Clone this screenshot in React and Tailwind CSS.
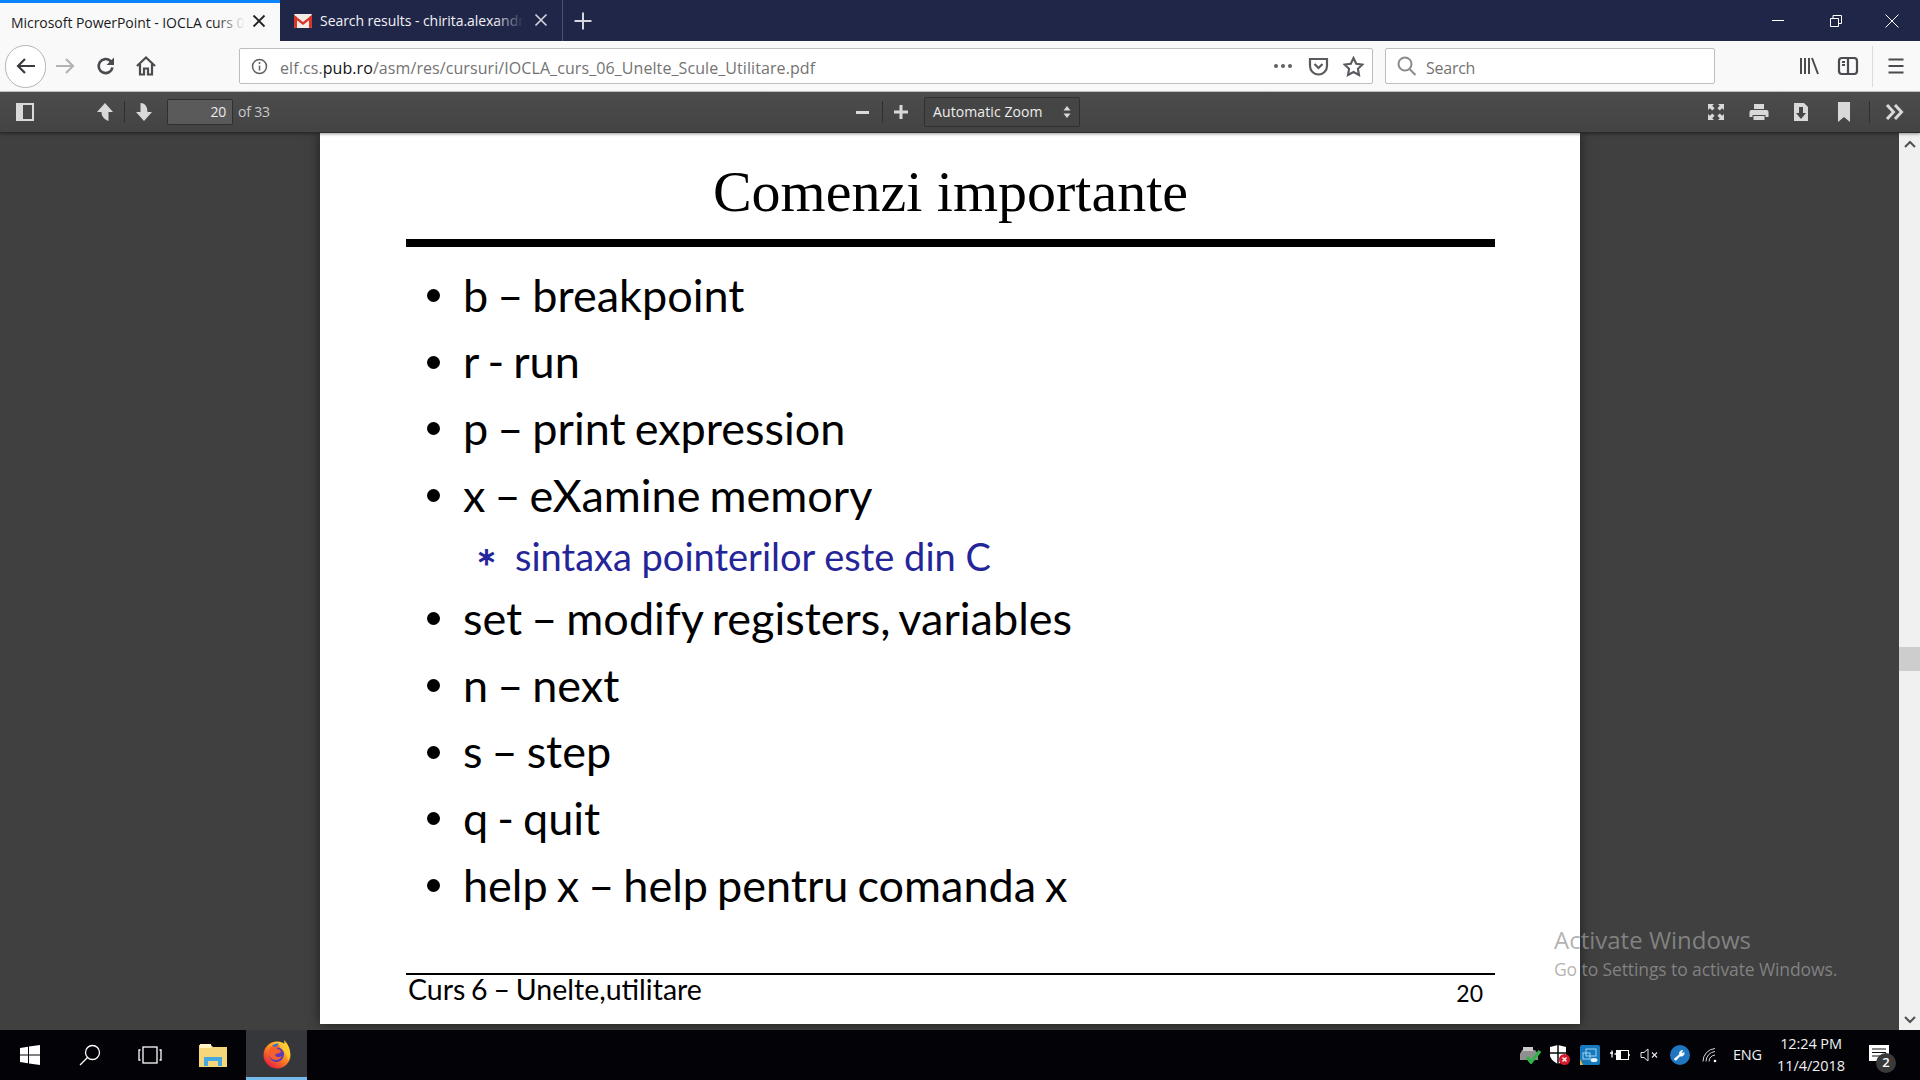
const ui = { fontFamily: '"Open Sans", "Noto Sans", sans-serif' };

function Slot({ w, children }) {
  return <div className="flex h-full shrink-0 items-center justify-center" style={{ width: w }}>{children}</div>;
}

function Ico({ s = 20, children, fill = "none", stroke = "currentColor", sw = 2, vb = "0 0 20 20" }) {
  return (
    <svg width={s} height={s} viewBox={vb} fill={fill} stroke={stroke} strokeWidth={sw}>
      {children}
    </svg>
  );
}

function Tabs() {
  return (
    <div className="flex h-[41px] shrink-0 bg-[#202648] text-[14px]" style={ui}>
      <div className="relative flex h-full w-[280px] items-center border-t-[3px] border-[#0a84ff] bg-[#f9f9fa] pl-[11px] text-[#1b1b1b]">
        <span className="whitespace-nowrap tracking-[-0.05px]">Microsoft PowerPoint - IOCLA curs 0</span>
        <div className="absolute left-[215px] top-0 h-full w-[30px] bg-gradient-to-r from-transparent to-[#f9f9fa]" />
        <div className="absolute left-[251px] top-[10px]">
          <Ico s={16} vb="0 0 16 16" sw={1.8} stroke="#222"><path d="M2.5 2.5l11 11M13.5 2.5l-11 11" /></Ico>
        </div>
      </div>
      <div className="relative flex h-full w-[283px] items-center border-r border-[#4b5070] pl-[14px] text-[#f2f2f5]">
        <svg width="18" height="14" viewBox="0 0 18 14" className="shrink-0">
          <rect width="18" height="14" rx="1" fill="#f1ece6" />
          <path d="M0 1l9 7 9-7v3l-9 7-9-7z" fill="#d8362a" />
          <path d="M0 1l3 2v11H1a1 1 0 0 1-1-1zM18 1l-3 2v11h2a1 1 0 0 0 1-1z" fill="#d8362a" />
        </svg>
        <span className="ml-[8px] whitespace-nowrap tracking-[-0.05px]">Search results - chirita.alexandra</span>
        <div className="absolute left-[215px] top-0 h-full w-[38px] bg-gradient-to-r from-transparent via-[#202648] via-75% to-[#202648]" />
        <div className="absolute left-[253px] top-[12px]">
          <Ico s={16} vb="0 0 16 16" sw={1.6} stroke="#d5d6de"><path d="M2.5 2.5l11 11M13.5 2.5l-11 11" /></Ico>
        </div>
      </div>
      <Slot w={40}>
        <Ico s={20} sw={2} stroke="#d5d6de" vb="0 0 20 20"><path d="M10 1.5v17M1.5 10h17" /></Ico>
      </Slot>
      <div className="flex-1" />
      <Slot w={58}><div className="mr-[2px] h-px w-[12px] bg-white" /></Slot>
      <Slot w={56}>
        <Ico s={14} vb="0 0 14 14" sw={1} stroke="#fff"><path d="M1.5 4.5h8v8h-8zM4 4.5V1.5h8.5v8H9.5" /></Ico>
      </Slot>
      <Slot w={56}>
        <Ico s={16} vb="0 0 16 16" sw={1} stroke="#fff"><path d="M1.5 1.5l13 13M14.5 1.5l-13 13" /></Ico>
      </Slot>
    </div>
  );
}

function Nav() {
  return (
    <div className="flex h-[51px] shrink-0 items-center border-b border-[#cfcfd1] bg-[#f9f9fa] pl-[5px] text-[#4a4a4f]" style={ui}>
      <div className="flex h-[43px] w-[41px] shrink-0 items-center justify-center rounded-full border border-[#b4b4b6] bg-white">
        <Ico s={22} sw={2.2} stroke="#3b3b3f" vb="0 0 22 22"><path d="M20 11H3M10 4l-7 7 7 7" /></Ico>
      </div>
      <Slot w={38}>
        <Ico s={22} sw={2.2} stroke="#b3b3b5" vb="0 0 22 22"><path d="M2 11h17M12 4l7 7-7 7" /></Ico>
      </Slot>
      <Slot w={44}>
        <Ico s={20} sw={2.6} stroke="#4a4a4f"><path d="M16.5 11.5a7 7 0 1 1-2-6.5l2.5 2.5" /><path d="M18 1.500v7.500h-7.500" fill="#4a4a4f" stroke="none" /></Ico>
      </Slot>
      <Slot w={36}>
        <Ico s={22} sw={2.2} stroke="#4a4a4f" vb="0 0 22 22"><path d="M2 11l9-8.5L20 11M5 9v10.5h4v-6h4v6h4V9" /></Ico>
      </Slot>
      <div className="ml-[75px] flex h-[36px] w-[1134px] shrink-0 items-center rounded-[2px] border border-[#bdbdbf] bg-white pl-[11px] pr-[8px]">
        <Ico s={17} vb="0 0 17 17" sw={1.5} stroke="#5f5f63"><circle cx="8.5" cy="8.5" r="7" /><path d="M8.5 7.5v5M8.5 4v2" /></Ico>
        <span className="ml-[12px] whitespace-nowrap pt-[3px] text-[16px] tracking-[0.08px] text-[#737373]">
          elf.cs.<span className="text-[#111]">pub.ro</span>/asm/res/cursuri/IOCLA_curs_06_Unelte_Scule_Utilitare.pdf
        </span>
        <div className="flex-1" />
        <div className="flex gap-[3px]">
          <div className="h-[4px] w-[4px] rounded-full bg-[#5f5f63]" />
          <div className="h-[4px] w-[4px] rounded-full bg-[#5f5f63]" />
          <div className="h-[4px] w-[4px] rounded-full bg-[#5f5f63]" />
        </div>
        <div className="ml-[16px]">
          <Ico s={21} vb="0 0 21 21" sw={2.2} stroke="#5a5a5e"><path d="M2 3h17v7a8.5 8.5 0 0 1-17 0zM6.5 8l4 4 4-4" /></Ico>
        </div>
        <div className="ml-[14px]">
          <Ico s={21} vb="0 0 21 21" sw={2.1} stroke="#5a5a5e"><path d="M10.5 2l2.7 5.7 6.2.8-4.5 4.3 1.1 6.2-5.5-3-5.5 3 1.1-6.2-4.5-4.3 6.2-.8z" /></Ico>
        </div>
      </div>
      <div className="ml-[12px] flex h-[36px] w-[330px] shrink-0 items-center rounded-[2px] border border-[#bdbdbf] bg-white pl-[10px]">
        <Ico s={22} vb="0 0 22 22" sw={2} stroke="#8a8a8e"><circle cx="9" cy="9" r="6.5" /><path d="M13.5 14l6 6" /></Ico>
        <span className="ml-[8px] pt-[3px] text-[16px] tracking-[-0.25px] text-[#737373]">Search</span>
      </div>
      <div className="w-[74px] shrink-0" />
      <Slot w={40}>
        <Ico s={20} sw={2} stroke="#4a4a4f"><path d="M2 2v16M6 2v16M10 2v16M13 2l6 16" /></Ico>
      </Slot>
      <Slot w={38}>
        <Ico s={22} vb="0 0 22 22" sw={2.2} stroke="#4a4a4f"><rect x="2" y="3" width="18" height="16" rx="3" /><path d="M11 3v16M5 7h3M5 10h3" /></Ico>
      </Slot>
      <div className="ml-[5px] h-[41px] w-px bg-[#dcdcde]" />
      <Slot w={46}>
        <Ico s={18} vb="0 0 18 18" sw={2.2} stroke="#4a4a4f"><path d="M1.5 2.5h15M1.5 9h15M1.5 15.5h15" /></Ico>
      </Slot>
    </div>
  );
}

function PdfToolbar() {
  const c = "#d9d9d9";
  return (
    <div className="z-10 flex h-[41px] shrink-0 items-center border-b border-[#2b2b2b] bg-gradient-to-b from-[#4c4c4c] to-[#434343] text-[#d9d9d9] shadow-[0_1px_3px_rgba(0,0,0,0.4)]" style={ui}>
      <div className="flex h-full w-[843px] shrink-0 items-center">
        <Slot w={49}>
          <svg width="18" height="18" viewBox="0 0 18 18"><rect x="1" y="1" width="16" height="16" fill="none" stroke={c} strokeWidth="2" /><rect x="2" y="2" width="5" height="14" fill={c} /></svg>
        </Slot>
        <div className="w-[37px] shrink-0" />
        <Slot w={38}>
          <svg width="18" height="20" viewBox="0 0 18 20"><path d="M9 1L1 10h4.5c0 4 2 7 7 9V10H17z" fill={c} /></svg>
        </Slot>
        <div className="h-[22px] w-px bg-[#2e2e2e]" />
        <Slot w={38}>
          <svg width="18" height="20" viewBox="0 0 18 20"><path d="M9 19L1 10h4.5V1c4 0 7 3 7 9H17z" fill={c} /></svg>
        </Slot>
        <div className="ml-[4px] flex h-[26px] w-[66px] shrink-0 items-center justify-end rounded-[2px] border border-[#2f2f2f] bg-[#5a5a5a] pb-[2px] pr-[6px] text-[14px] tracking-[-0.3px] text-[#eaeaea]">20</div>
        <span className="ml-[5px] pb-[2px] text-[14px] tracking-[-0.2px] text-[#c9c9c9]">of 33</span>
      </div>
      <Slot w={39}><div className="h-[3px] w-[13px] bg-[#d9d9d9]" /></Slot>
      <div className="h-[22px] w-px bg-[#2e2e2e]" />
      <Slot w={35}>
        <svg width="14" height="14" viewBox="0 0 14 14"><path d="M5.5 0h3v5.5H14v3H8.5V14h-3V8.5H0v-3h5.5z" fill={c} /></svg>
      </Slot>
      <div className="ml-[6px] flex h-[30px] w-[156px] shrink-0 items-center rounded-[2px] border border-[#2f2f2f] bg-[#454545] pl-[8px] text-[14px] tracking-[0.1px] text-[#eeeeee]">
        <span className="pb-[2px]">Automatic Zoom</span>
        <div className="flex-1" />
        <svg width="8" height="12" viewBox="0 0 8 12" className="mr-[8px]"><path d="M4 0l3.5 4.5h-7zM4 12L.5 7.5h7z" fill={c} /></svg>
      </div>
      <div className="flex h-full flex-1 items-center justify-end">
        <Slot w={42}>
          <svg width="18" height="18" viewBox="0 0 18 18" fill={c}><path d="M1 1h6L5.2 2.8 7.6 5.2 5.2 7.6 2.8 5.2 1 7zM17 1v6l-1.800-1.800-2.400 2.400-2.400-2.400 2.400-2.400L11 1zM1 17v-6l1.800 1.800 2.400-2.400 2.400 2.400-2.400 2.400L7 17zM17 17h-6l1.800-1.800-2.400-2.400 2.400-2.400 2.400 2.400L17 11z" /></svg>
        </Slot>
        <Slot w={43}>
          <svg width="20" height="18" viewBox="0 0 20 18" fill={c}><path d="M5 1h10v5H5zM2.500 7h15A2 2 0 0 1 19.500 9v5h-3v-2h-13v2h-3V9a2 2 0 0 1 2-2zM4.500 13h11v4h-11z" /></svg>
        </Slot>
        <Slot w={42}>
          <svg width="16" height="20" viewBox="0 0 16 20"><path d="M1 1h10l4 4v14H1z" fill={c} /><path d="M6 5h4v6h3l-5 6-5-6h3z" fill="#464646" /></svg>
        </Slot>
        <Slot w={44}>
          <svg width="12" height="20" viewBox="0 0 12 20"><path d="M0 0h12v20l-6-5-6 5z" fill={c} /></svg>
        </Slot>
        <div className="ml-[3px] h-[22px] w-px bg-[#2e2e2e]" />
        <Slot w={50}>
          <svg width="20" height="16" viewBox="0 0 20 16" fill="none" stroke={c} strokeWidth="3"><path d="M2 1l6.500 7L2 15M10 1l6.500 7L10 15" /></svg>
        </Slot>
      </div>
    </div>
  );
}

const items = [
  "b – breakpoint",
  "r - run",
  "p – print expression",
  "x – eXamine memory",
  null,
  "set – modify registers, variables",
  "n – next",
  "s – step",
  "q - quit",
  "help x – help pentru comanda x",
];

function Slide() {
  return (
    <div className="ml-[320px] flex h-[891px] w-[1260px] shrink-0 flex-col bg-white pl-[86px] pr-[85px] text-black shadow-[0_0_12px_rgba(0,0,0,0.55)]">
      <div className="h-[106px] pt-[23px] text-center text-[58px] leading-[72px]" style={{ fontFamily: '"Liberation Serif", serif' }}>
        Comenzi importante
      </div>
      <div className="h-[8px] bg-black" />
      <div className="mt-[15px] flex flex-col" style={{ fontFamily: 'Lato, "Noto Sans", sans-serif' }}>
        {items.map((t, i) =>
          t ? (
            <div key={i} className="flex h-[66.8px] items-center text-[45px] [word-spacing:-2.5px]">
              <div className="ml-[21px] h-[13px] w-[13px] rounded-full bg-black" />
              <span className="ml-[23px] whitespace-nowrap">{t}</span>
            </div>
          ) : (
            <div key={i} className="flex h-[56px] items-center pb-[2px] text-[38px] text-[#25259a]">
              <span className="ml-[70px] w-[39px] text-[25px] font-bold">∗</span>
              <span className="whitespace-nowrap">sintaxa pointerilor este din C</span>
            </div>
          )
        )}
      </div>
      <div className="mt-auto flex h-[51px] items-start border-t-2 border-black" style={{ fontFamily: 'Lato, "Noto Sans", sans-serif' }}>
        <span className="-mt-[2px] ml-[2px] text-[28.500px] leading-[32px] [word-spacing:-1.5px]">Curs 6 – Unelte,utilitare</span>
        <div className="flex-1" />
        <span className="mr-[12px] mt-[2px] text-[23px] leading-[32px]">20</span>
      </div>
    </div>
  );
}

function Scrollbar() {
  return (
    <div className="flex w-[21px] shrink-0 flex-col items-center bg-[#f0f0f0]">
      <div className="flex h-[21px] items-center">
        <svg width="12" height="8" viewBox="0 0 12 8" fill="none" stroke="#505050" strokeWidth="2"><path d="M1 7l5-5 5 5" /></svg>
      </div>
      <div className="mt-[493px] h-[24px] w-full bg-[#cdcdcd]" />
      <div className="flex-1" />
      <div className="flex h-[21px] items-center">
        <svg width="12" height="8" viewBox="0 0 12 8" fill="none" stroke="#505050" strokeWidth="2"><path d="M1 1l5 5 5-5" /></svg>
      </div>
    </div>
  );
}

function FirefoxLogo() {
  return (
    <svg width="30" height="30" viewBox="0 0 30 30">
      <defs>
        <linearGradient id="ff" x1="0.8" y1="0.1" x2="0.2" y2="0.9">
          <stop offset="0" stopColor="#ffd43a" />
          <stop offset="0.45" stopColor="#ff8a1e" />
          <stop offset="1" stopColor="#e5243d" />
        </linearGradient>
      </defs>
      <circle cx="15" cy="16" r="13.500" fill="url(#ff)" />
      <path d="M22 1c3 3 6 7 6 13 0 3-1 6-2 7-1-5-3-9-6-11 2-3 3-6 2-9z" fill="#ffcb2e" />
      <circle cx="14.500" cy="15.500" r="7.500" fill="#5b3bb8" />
      <path d="M8 9c3-3 7-4 10-2-2 1-3 2-3 3 2 0 4 1 4 3-2 2-5 1-6 3 1 2 4 3 7 1-2 5-9 5-12 1-2-3-2-6 0-9z" fill="#f4612c" />
      <path d="M10 7c2-2 5-3 7-2-1 1-3 2-3 3z" fill="#2c74d8" />
    </svg>
  );
}

function Tray() {
  return (
    <div className="flex h-full items-center pr-[20px] text-white">
      <Slot w={30}>
        <svg width="22" height="18" viewBox="0 0 22 18"><path d="M3 4h13l3 4v6H1V8z" fill="#8f8f8f" /><rect x="4" y="1" width="10" height="4" fill="#c9c9c9" /><path d="M8 11l4 5 9-11" fill="none" stroke="#34b34a" strokeWidth="3.500" /></svg>
      </Slot>
      <Slot w={30}>
        <svg width="22" height="22" viewBox="0 0 22 22"><path d="M1 3l8-2 8 2v8c0 4-4 7-8 9-4-2-8-5-8-9z" fill="#fff" /><path d="M9 1v19M1 9h16" stroke="#0a0a0a" strokeWidth="1.500" /><circle cx="15.500" cy="15.500" r="5.500" fill="#d8192c" /><path d="M13.500 13.500l4 4M17.500 13.500l-4 4" stroke="#fff" strokeWidth="1.300" /></svg>
      </Slot>
      <Slot w={30}>
        <svg width="20" height="20" viewBox="0 0 20 20"><rect width="20" height="20" rx="2" fill="#1679bd" /><path d="M0 14l3 6H0z" fill="#f2b632" /><rect x="6" y="4" width="10" height="7" fill="none" stroke="#9fd4f2" strokeWidth="1" /><rect x="3" y="8" width="7" height="6" fill="none" stroke="#9fd4f2" strokeWidth="1" /><ellipse cx="14" cy="15" rx="3.500" ry="2" fill="#e8f4fb" /></svg>
      </Slot>
      <Slot w={30}>
        <svg width="20" height="14" viewBox="0 0 20 14" fill="none" stroke="#fff"><rect x="6.500" y="2.500" width="12" height="9" /><rect x="7" y="3" width="4" height="8" fill="#fff" stroke="none" /><path d="M19 6v2" strokeWidth="1.500" /><path d="M0 5h3M2 2.500v7M4.500 6H7" strokeWidth="1.300" /></svg>
      </Slot>
      <Slot w={30}>
        <svg width="20" height="14" viewBox="0 0 20 14" fill="none" stroke="#e8e8e8" strokeWidth="1"><path d="M1 4.500h3l4-3.500v12L4 9.500H1z" /><path d="M12 4.500l5 5M17 4.500l-5 5" strokeWidth="1.100" /></svg>
      </Slot>
      <Slot w={30}>
        <svg width="20" height="20" viewBox="0 0 20 20"><circle cx="10" cy="10" r="10" fill="#1f76c0" /><path d="M4 14l5.500-4.500a3 3 0 0 1 3.500-4l-1.500 1.500 1 1.500 1.600-1.200a3 3 0 0 1-4 3.700L6 15.500z" fill="#fff" stroke="#fff" strokeWidth="0.600" /></svg>
      </Slot>
      <Slot w={30}>
        <svg width="16" height="16" viewBox="0 0 16 16" fill="none" stroke="#d8d8d8" strokeWidth="1"><path d="M1 14.500A13 13 0 0 1 13 1.500M4 14.500A10 10 0 0 1 13 4.500M7 14.500A7 7 0 0 1 13 8" /><circle cx="13" cy="14" r="1.300" fill="#fff" stroke="none" /></svg>
      </Slot>
      <div className="w-[42px] shrink-0 pl-[8px] text-[14.500px] tracking-[-0.2px] text-[#f0f0f0]">ENG</div>
      <div className="ml-[3px] flex w-[82px] shrink-0 flex-col items-center text-[14.500px] leading-[22px] tracking-[-0.1px] text-[#f0f0f0]">
        <span>12:24 PM</span>
        <span>11/4/2018</span>
      </div>
      <div className="relative ml-[8px] h-full w-[40px] shrink-0">
        <svg width="20" height="19" viewBox="0 0 20 19" className="absolute left-[9px] top-[15px]"><path d="M0 0h20v16h-8l-2 3v-3H0z" fill="#fff" /><path d="M3 4h14M3 7.500h14M3 11h10" stroke="#111" strokeWidth="1" /></svg>
        <div className="absolute left-[16px] top-[23px] flex h-[20px] w-[20px] items-center justify-center rounded-full bg-[#3a3a3a] text-[13px] font-semibold text-white">2</div>
      </div>
    </div>
  );
}

function Taskbar() {
  return (
    <div className="z-10 flex h-[50px] shrink-0 items-stretch bg-[#020207]" style={ui}>
      <Slot w={60}>
        <svg width="20" height="20" viewBox="0 0 20 20" fill="#fff"><path d="M0 3l8-1.200V9.500H0zM9 1.600L20 0v9.500H9zM0 10.500h8v7.700L0 17zM9 10.500h11V20L9 18.400z" /></svg>
      </Slot>
      <Slot w={60}>
        <svg width="22" height="22" viewBox="0 0 22 22" fill="none" stroke="#fff" strokeWidth="1.300"><circle cx="13.500" cy="8.500" r="7" /><path d="M8.500 13.500L1 21" /></svg>
      </Slot>
      <Slot w={60}>
        <svg width="24" height="18" viewBox="0 0 24 18" fill="none" stroke="#fff" strokeWidth="1.300"><rect x="5" y="1" width="14" height="16" /><path d="M2.500 4H1v10h1.500M21.500 4H23v10h-1.500" /></svg>
      </Slot>
      <Slot w={66}>
        <svg width="28" height="24" viewBox="0 0 28 24"><path d="M0 2h12l2 2h14v20H0z" fill="#f5d67b" /><rect x="1" y="1" width="11" height="4" fill="#fff2c4" /><path d="M5 23v-9h18v9h-4v-5H9v5z" fill="#45a8e0" /></svg>
      </Slot>
      <div className="flex w-[61px] shrink-0 items-center justify-center border-b-[3px] border-[#76b9ed] bg-[#36373b]">
        <FirefoxLogo />
      </div>
      <div className="flex-1" />
      <Tray />
    </div>
  );
}

export default function App() {
  return (
    <div className="flex h-screen w-[1920px] flex-col overflow-hidden bg-[#404040]">
      <Tabs />
      <Nav />
      <PdfToolbar />
      <div className="relative flex min-h-0 flex-1">
        <div className="min-w-0 flex-1 bg-[#404040]">
          <Slide />
        </div>
        <Scrollbar />
        <div className="absolute left-[1554px] top-[791px] text-[#999]/75" style={ui}>
          <div className="text-[24px] leading-[32px]">Activate Windows</div>
          <div className="mt-[2px] text-[17.500px] leading-[22px] tracking-[-0.1px]">Go to Settings to activate Windows.</div>
        </div>
      </div>
      <Taskbar />
    </div>
  );
}
